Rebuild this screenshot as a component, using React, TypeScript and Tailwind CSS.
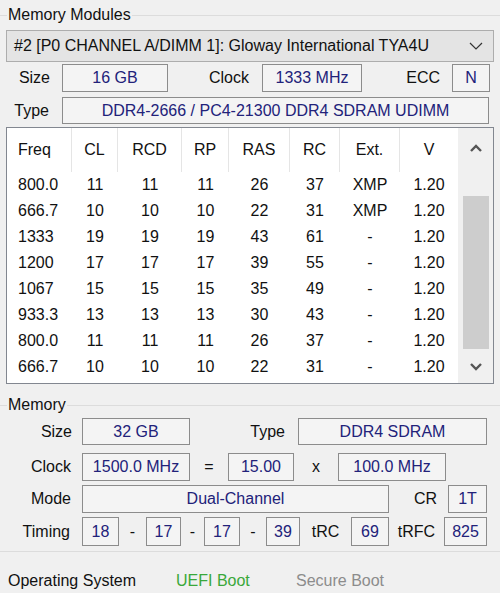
const font = { fontFamily: '"Liberation Sans", Arial, sans-serif' };

type Spd = [string, string, string, string, string, string, string, string];

const timings: Spd[] = [
  ["800.0", "11", "11", "11", "26", "37", "XMP", "1.20"],
  ["666.7", "10", "10", "10", "22", "31", "XMP", "1.20"],
  ["1333", "19", "19", "19", "43", "61", "-", "1.20"],
  ["1200", "17", "17", "17", "39", "55", "-", "1.20"],
  ["1067", "15", "15", "15", "35", "49", "-", "1.20"],
  ["933.3", "13", "13", "13", "30", "43", "-", "1.20"],
  ["800.0", "11", "11", "11", "26", "37", "-", "1.20"],
  ["666.7", "10", "10", "10", "22", "31", "-", "1.20"],
];

const cols = [
  { name: "Freq", w: "w-[65px]", align: "justify-start pl-[11px]" },
  { name: "CL", w: "w-[46px]", align: "justify-center" },
  { name: "RCD", w: "w-[64px]", align: "justify-center" },
  { name: "RP", w: "w-[47px]", align: "justify-center" },
  { name: "RAS", w: "w-[61px]", align: "justify-center" },
  { name: "RC", w: "w-[50px]", align: "justify-center" },
  { name: "Ext.", w: "w-[60px]", align: "justify-center" },
  { name: "V", w: "w-[58px]", align: "justify-center" },
];

function Field({ w, children }: { w: string; children: React.ReactNode }) {
  return (
    <div
      className={`${w} h-full flex items-center justify-center border border-[#8c8c8c] bg-[#f4f4f4] text-[#22227a]`}
    >
      {children}
    </div>
  );
}

function Label({ w, children, right = true, pr = "" }: { w: string; children: React.ReactNode; right?: boolean; pr?: string }) {
  return (
    <div className={`${w} h-full flex items-center ${right ? "justify-end" : "justify-center"} ${pr} text-[#111]`}>
      {children}
    </div>
  );
}

function Legend({ text }: { text: string }) {
  return (
    <div className="flex items-center h-full">
      <div className="w-[7px] h-px bg-[#dcdcdc]" />
      <span className="px-[1px] text-[#111]">{text}</span>
      <div className="flex-1 h-px bg-[#dcdcdc]" />
    </div>
  );
}

export default function App() {
  return (
    <div className="w-[500px] h-[593px] bg-[#f0f0f0] text-[16px] leading-none overflow-hidden" style={font}>
      <div className="h-[30px]">
        <Legend text="Memory Modules" />
      </div>

      <div className="px-[6px]">
        <div className="h-[32px] flex items-center bg-[#e4e4e4] border border-[#adadad] pl-[7px] pr-[8px]">
          <span className="flex-1 text-[#111] whitespace-nowrap">
            #2 [P0 CHANNEL A/DIMM 1]: Gloway International TYA4U
          </span>
          <svg width="14" height="8" viewBox="0 0 14 8" className="ml-[8px] mr-[2px]">
            <polyline points="1,1 7,7 13,1" fill="none" stroke="#333" strokeWidth="1.2" />
          </svg>
        </div>

        <div className="mt-[2px] h-[28px] flex">
          <Label w="w-[56px]" pr="pr-[12px]">Size</Label>
          <Field w="w-[106px]">16 GB</Field>
          <Label w="w-[94px]" pr="pr-[13px]">Clock</Label>
          <Field w="w-[100px]">1333 MHz</Field>
          <Label w="w-[90px]" pr="pr-[12px]">ECC</Label>
          <Field w="w-[38px]">N</Field>
        </div>

        <div className="mt-[5px] h-[27px] flex">
          <Label w="w-[56px]" pr="pr-[13px]">Type</Label>
          <Field w="w-[427px]">DDR4-2666 / PC4-21300 DDR4 SDRAM UDIMM</Field>
        </div>

        <div className="mt-[3px] h-[257px] border border-[#828790] bg-white flex text-[#111]">
          <div className="flex flex-col">
            <div className="h-[44px] flex">
              {cols.map((c, i) => (
                <div
                  key={c.name}
                  className={`${c.w} h-full flex items-center ${c.align} ${i < cols.length - 1 ? "border-r border-[#e5e5e5]" : ""}`}
                >
                  {c.name}
                </div>
              ))}
            </div>
            {timings.map((r, ri) => (
              <div key={ri} className="h-[26px] flex">
                {r.map((v, ci) => (
                  <div key={ci} className={`${cols[ci].w} h-full flex items-center ${cols[ci].align}`}>
                    {v}
                  </div>
                ))}
              </div>
            ))}
          </div>
          <div className="flex-1 bg-[#f0f0f0] flex flex-col items-center">
            <div className="h-[40px] flex items-center justify-center">
              <svg width="14" height="9" viewBox="0 0 14 9">
                <polyline points="2,7 7,2 12,7" fill="none" stroke="#555" strokeWidth="2.4" />
              </svg>
            </div>
            <div className="mt-[28px] w-[26px] h-[153px] bg-[#cdcdcd]" />
            <div className="flex-1 flex items-center justify-center">
              <svg width="14" height="9" viewBox="0 0 14 9">
                <polyline points="2,2 7,7 12,2" fill="none" stroke="#555" strokeWidth="2.4" />
              </svg>
            </div>
          </div>
        </div>
      </div>

      <div className="mt-[8px] h-[26px]">
        <Legend text="Memory" />
      </div>

      <div className="px-[6px]">
        <div className="h-[27px] flex">
          <Label w="w-[76px]" pr="pr-[10px]">Size</Label>
          <Field w="w-[108px]">32 GB</Field>
          <Label w="w-[108px]" pr="pr-[13px]">Type</Label>
          <Field w="w-[189px]">DDR4 SDRAM</Field>
        </div>

        <div className="mt-[8px] h-[28px] flex">
          <Label w="w-[76px]" pr="pr-[11px]">Clock</Label>
          <Field w="w-[108px]">1500.0 MHz</Field>
          <Label w="w-[38px]" right={false}>=</Label>
          <Field w="w-[66px]">15.00</Field>
          <Label w="w-[44px]" right={false}>x</Label>
          <Field w="w-[108px]">100.0 MHz</Field>
        </div>

        <div className="mt-[4px] h-[28px] flex">
          <Label w="w-[76px]" pr="pr-[11px]">Mode</Label>
          <Field w="w-[307px]">Dual-Channel</Field>
          <Label w="w-[59px]" pr="pr-[11px]">CR</Label>
          <Field w="w-[39px]">1T</Field>
        </div>

        <div className="mt-[4px] h-[29px] flex">
          <Label w="w-[76px]" pr="pr-[12px]">Timing</Label>
          <Field w="w-[37px]">18</Field>
          <Label w="w-[27px]" right={false}>-</Label>
          <Field w="w-[35px]">17</Field>
          <Label w="w-[23px]" right={false}>-</Label>
          <Field w="w-[36px]">17</Field>
          <Label w="w-[26px]" right={false}>-</Label>
          <Field w="w-[34px]">39</Field>
          <Label w="w-[51px]" right={false}>tRC</Label>
          <Field w="w-[38px]">69</Field>
          <Label w="w-[55px]" right={false}>tRFC</Label>
          <Field w="w-[43px]">825</Field>
        </div>
      </div>

      <div className="mt-[5px] h-px bg-[#dcdcdc]" />

      <div className="mt-[17px] h-[24px] flex items-center pl-[8px]">
        <span className="w-[168px] text-[#111]">Operating System</span>
        <span className="w-[120px] text-[#3aa83a]">UEFI Boot</span>
        <span className="text-[#8c8c8c]">Secure Boot</span>
      </div>
    </div>
  );
}
